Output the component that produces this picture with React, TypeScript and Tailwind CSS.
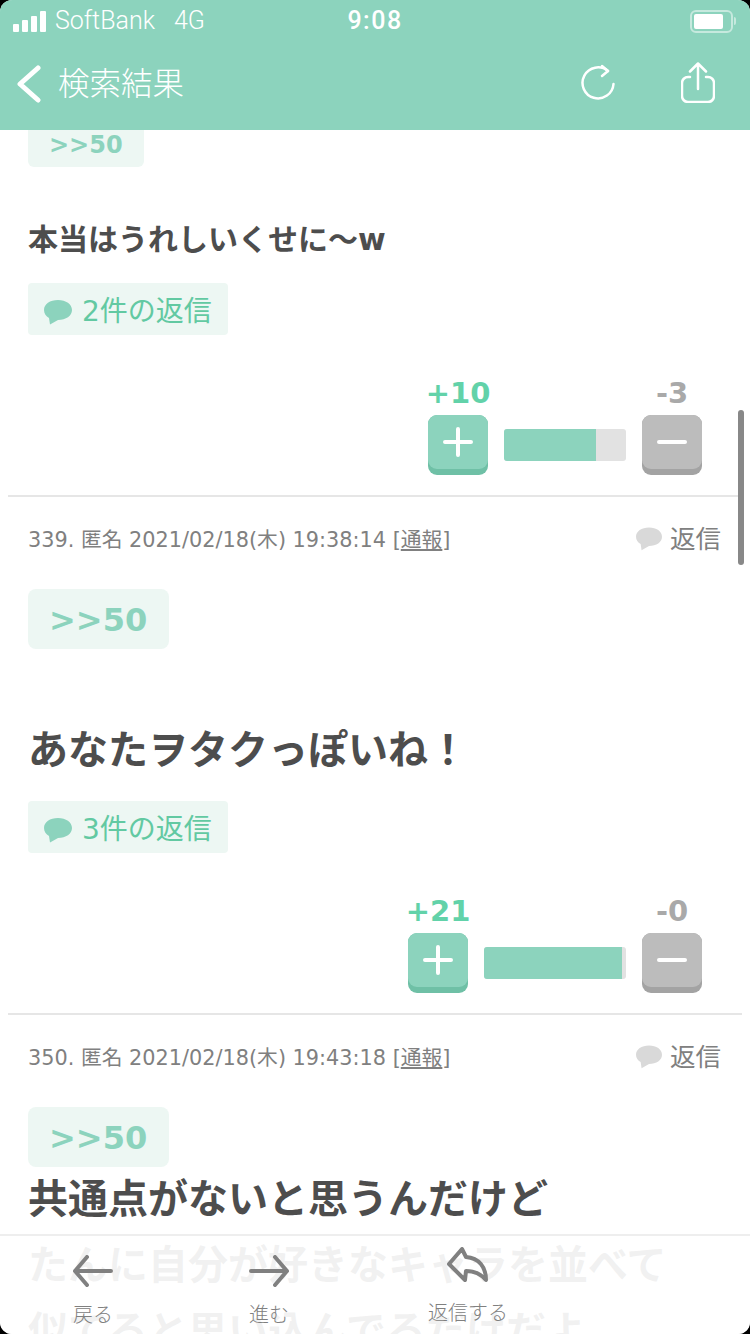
function Bubble({ className }: { className: string }) {
  return (
    <svg viewBox="0 0 28 25" className={className} fill="currentColor">
      <path d="M14 0C6 0 0 4 0 10c0 3.500 2 6.300 5 8l1 6.500 8-4.500c8 0 14-4.200 14-10S22 0 14 0z" />
    </svg>
  );
}

type VoteProps = {
  up: number;
  down: number;
  barWidth: string;
  fillWidth: string;
};

function VoteBlock({ up, down, barWidth, fillWidth }: VoteProps) {
  return (
    <div className="flex justify-end pr-[48px] pb-[20px] items-end gap-[16px] h-[160px]">
      <div className="w-[60px] flex flex-col items-center">
        <span className="font-bold text-[29px] leading-[34px] mb-[5px] whitespace-nowrap text-[#62d2a9]">+{up}</span>
        <div className="w-[60px] h-[60px] rounded-[9px] bg-[#6fc0a6] pb-[6px]">
          <div className="h-full rounded-[9px] bg-[#8cd3bd] flex items-center justify-center">
            <svg viewBox="0 0 30 30" className="w-[30px] h-[30px]" stroke="white" strokeWidth="4" strokeLinecap="round">
              <path d="M15 2v26M2 15h26" />
            </svg>
          </div>
        </div>
      </div>
      <div className={`${barWidth} h-[32px] mb-[14px] rounded-[3px] bg-[#e2e2e2] overflow-hidden`}>
        <div className={`${fillWidth} h-full bg-[#8cd3bd]`} />
      </div>
      <div className="w-[60px] flex flex-col items-center">
        <span className="font-bold text-[29px] leading-[34px] mb-[5px] whitespace-nowrap text-[#a9a9a9]">-{down}</span>
        <div className="w-[60px] h-[60px] rounded-[9px] bg-[#a3a3a3] pb-[6px]">
          <div className="h-full rounded-[9px] bg-[#bcbcbc] flex items-center justify-center">
            <div className="w-[30px] h-[4px] rounded-full bg-white" />
          </div>
        </div>
      </div>
    </div>
  );
}

function ReplyPill({ count }: { count: number }) {
  return (
    <div className="w-[200px] h-[52px] rounded-[4px] bg-[#edf7f3] flex items-center pl-[16px] gap-[10px]">
      <Bubble className="w-[28px] h-[25px] text-[#8cd3bd] mt-[6px]" />
      <span className="mt-[6px] text-[28px] leading-none text-[#62c9a2]">{count}件の返信</span>
    </div>
  );
}

function Anchor() {
  return (
    <div className="w-[141px] h-[60px] pt-[2px] rounded-[8px] bg-[#edf7f3] flex items-center pl-[21px] font-bold text-[32px] text-[#8cd3bd]">
      &gt;&gt;50
    </div>
  );
}

function MetaRow({ meta }: { meta: string }) {
  return (
    <div className="h-[75px] pt-[11px] pl-[28px] pr-[29px] flex items-center justify-between text-[#808080]">
      <span className="text-[20.800px] leading-none">
        {meta} [<span className="underline">通報</span>]
      </span>
      <span className="flex items-center gap-[8px]">
        <Bubble className="w-[26px] h-[24px] text-[#d9d9d9] -mt-[3px]" />
        <span className="text-[25.500px] leading-none">返信</span>
      </span>
    </div>
  );
}

function StatusBar() {
  return (
    <div className="relative h-[42px] px-[13px] flex items-center justify-between text-white font-['Roboto',sans-serif]">
      <div className="flex items-center">
        <div className="flex items-end gap-[3px] h-[21px]">
          <div className="w-[6px] h-[8px] rounded-[1px] bg-white" />
          <div className="w-[6px] h-[12px] rounded-[1px] bg-white" />
          <div className="w-[6px] h-[16px] rounded-[1px] bg-white" />
          <div className="w-[6px] h-[21px] rounded-[1px] bg-white" />
        </div>
        <span className="ml-[9px] text-[25px] font-light">SoftBank</span>
        <span className="ml-[19px] text-[25px] font-light">4G</span>
      </div>
      <span className="absolute left-0 right-0 text-center text-[25px] font-medium tracking-[1.500px]">9:08</span>
      <div className="flex items-center mr-[1px]">
        <div className="w-[43px] h-[23px] p-[2px] rounded-[6px] border-[2px] border-white/50">
          <div className="w-[29px] h-full rounded-[2px] bg-white" />
        </div>
        <div className="w-[2px] h-[8px] ml-[1px] rounded-r bg-white/50" />
      </div>
    </div>
  );
}

function NavBar() {
  return (
    <div className="h-[84px] pl-[17px] flex items-center text-white">
      <svg viewBox="0 0 24 38" className="w-[24px] h-[38px]" fill="none" stroke="white" strokeWidth="5" strokeLinecap="round" strokeLinejoin="round">
        <path d="M21 3L3 19l18 16" />
      </svg>
      <span className="ml-[17px] mt-[2px] text-[31.500px] leading-none font-light">検索結果</span>
      <svg viewBox="0 0 36 40" className="ml-auto w-[36px] h-[40px]" fill="none" stroke="white" strokeWidth="2.500" strokeLinecap="round" strokeLinejoin="round">
        <path d="M28 7A15.500 15.500 0 1 0 33.500 20" />
        <path d="M22 2l6 5-6 5" />
      </svg>
      <svg viewBox="0 0 34 41" className="ml-[65px] mr-[35px] -mt-[3px] w-[34px] h-[41px]" fill="none" stroke="white" strokeWidth="2.500" strokeLinecap="round" strokeLinejoin="round">
        <path d="M9 15H7a6 6 0 0 0-6 6v13a6 6 0 0 0 6 6h20a6 6 0 0 0 6-6V21a6 6 0 0 0-6-6h-2" />
        <path d="M17 27V1.500M9 9.500l8-8 8 8" />
      </svg>
    </div>
  );
}

function BottomBar() {
  return (
    <div className="absolute left-0 right-0 bottom-0 h-[100px] bg-white/[.92] border-t-[2px] border-[#eeeeee] pl-[73px] flex items-start text-[#808080]">
      <div className="w-[40px] pt-[19px] flex flex-col items-center">
        <svg viewBox="0 0 40 32" className="w-[40px] h-[32px] mb-[18px]" fill="none" stroke="#808080" strokeWidth="4" strokeLinecap="round" strokeLinejoin="round">
          <path d="M38 16H2M14 2L2 16l12 14" />
        </svg>
        <span className="text-[20px] leading-none font-light whitespace-nowrap">戻る</span>
      </div>
      <div className="ml-[136px] w-[40px] pt-[19px] flex flex-col items-center">
        <svg viewBox="0 0 40 32" className="w-[40px] h-[32px] mb-[18px]" fill="none" stroke="#808080" strokeWidth="4" strokeLinecap="round" strokeLinejoin="round">
          <path d="M2 16h36M26 2l12 14-12 14" />
        </svg>
        <span className="text-[20px] leading-none font-light whitespace-nowrap">進む</span>
      </div>
      <div className="ml-[139px] w-[80px] pt-[11px] flex flex-col items-center">
        <svg viewBox="0 0 42 36" className="w-[42px] h-[36px] mb-[20px]" fill="none" stroke="#808080" strokeWidth="4" strokeLinecap="round" strokeLinejoin="round">
          <path d="M15 2L2 17l16 16 1-9c8 0 14 2 20 9C39 20 32 11 19 10z" />
        </svg>
        <span className="text-[20px] leading-none font-light whitespace-nowrap">返信する</span>
      </div>
    </div>
  );
}

export default function App() {
  return (
    <div className="w-[750px] h-[1334px] bg-black">
      <div className="relative w-full h-full rounded-[12px] overflow-hidden bg-white flex flex-col font-['DejaVu_Sans','Noto_Sans_CJK_JP',sans-serif]">
        <div className="relative z-10 shrink-0 h-[130px] bg-[#8cd3bd]">
          <StatusBar />
          <NavBar />
        </div>

        <div className="-mt-[9px]">
          <div className="pl-[28px]">
            <div className="w-[116px] h-[46px] pt-[2px] rounded-[6px] bg-[#edf7f3] flex items-center pl-[21px] font-bold text-[24px] text-[#8cd3bd]">
              &gt;&gt;50
            </div>
            <p className="mt-[52px] text-[30px] leading-[42px] font-bold text-[#4d4d4d]">本当はうれしいくせに〜w</p>
            <div className="mt-[22px]">
              <ReplyPill count={2} />
            </div>
          </div>
          <VoteBlock up={10} down={3} barWidth="w-[122px]" fillWidth="w-[75%]" />
          <div className="mx-[8px] h-[2px] bg-[#e6e6e6]" />

          <MetaRow meta="339. 匿名 2021/02/18(木) 19:38:14" />
          <div className="pl-[28px] pt-[17px]">
            <Anchor />
            <p className="mt-[74px] text-[40px] leading-[54px] font-bold text-[#4d4d4d]">あなたヲタクっぽいね！</p>
            <div className="mt-[24px]">
              <ReplyPill count={3} />
            </div>
          </div>
          <VoteBlock up={21} down={0} barWidth="w-[142px]" fillWidth="w-[97%]" />
          <div className="mx-[8px] h-[2px] bg-[#e6e6e6]" />

          <MetaRow meta="350. 匿名 2021/02/18(木) 19:43:18" />
          <div className="pl-[28px] pt-[17px]">
            <Anchor />
            <p className="-mt-[1px] text-[40px] leading-[66px] font-bold text-[#4d4d4d]">共通点がないと思うんだけど</p>
            <p className="text-[40px] leading-[66px] font-bold text-[#4d4d4d]">たんに自分が好きなキャラを並べて</p>
            <p className="text-[40px] leading-[66px] font-bold text-[#4d4d4d]">似てると思い込んでるだけだよ</p>
          </div>
        </div>

        <div className="absolute left-[738px] top-[410px] w-[6px] h-[155px] rounded-full bg-[#888888]" />
        <BottomBar />
      </div>
    </div>
  );
}
